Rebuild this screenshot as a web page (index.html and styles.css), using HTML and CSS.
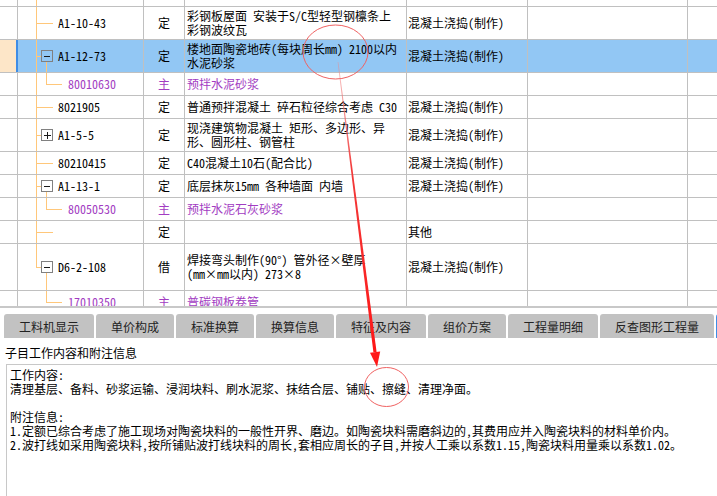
FILE: index.html
```html
<!DOCTYPE html>
<html lang="zh-CN">
<head>
<meta charset="utf-8">
<title>子目工作内容</title>
<link rel="stylesheet" href="styles.css">
</head>
<body>
<div class="page">
  <div class="grid">
    <div class="row h7">
      <div class="c ind"></div><div class="c code t-leafv"></div><div class="c"></div><div class="c"></div><div class="c"></div><div class="c"></div><div class="c last"></div>
    </div>
    <div class="row h33">
      <div class="c ind"></div><div class="c code t-leaf">A1-10-43</div><div class="c ty">定</div><div class="c nm">彩钢板屋面 安装于S/C型轻型钢檩条上<br>彩钢波纹瓦</div><div class="c sp">混凝土浇捣(制作)</div><div class="c"></div><div class="c last"></div>
    </div>
    <div class="row h33 sel">
      <div class="c ind"></div><div class="c code t-open"><span class="box minus"></span>A1-12-73</div><div class="c ty">定</div><div class="c nm">楼地面陶瓷地砖(每块周长mm) 2100以内<br>水泥砂浆</div><div class="c sp">混凝土浇捣(制作)</div><div class="c"></div><div class="c last"></div>
    </div>
    <div class="row h23 purple">
      <div class="c ind"></div><div class="c code t-child">80010630</div><div class="c ty">主</div><div class="c nm">预拌水泥砂浆</div><div class="c sp"></div><div class="c"></div><div class="c last"></div>
    </div>
    <div class="row h23">
      <div class="c ind"></div><div class="c code t-leaf">8021905</div><div class="c ty">定</div><div class="c nm">普通预拌混凝土 碎石粒径综合考虑 C30</div><div class="c sp">混凝土浇捣(制作)</div><div class="c"></div><div class="c last"></div>
    </div>
    <div class="row h33">
      <div class="c ind"></div><div class="c code t-closed"><span class="box plus"></span>A1-5-5</div><div class="c ty">定</div><div class="c nm">现浇建筑物混凝土 矩形、多边形、异<br>形、圆形柱、钢管柱</div><div class="c sp">混凝土浇捣(制作)</div><div class="c"></div><div class="c last"></div>
    </div>
    <div class="row h23">
      <div class="c ind"></div><div class="c code t-leaf">80210415</div><div class="c ty">定</div><div class="c nm">C40混凝土10石(配合比)</div><div class="c sp">混凝土浇捣(制作)</div><div class="c"></div><div class="c last"></div>
    </div>
    <div class="row h23">
      <div class="c ind"></div><div class="c code t-open"><span class="box minus"></span>A1-13-1</div><div class="c ty">定</div><div class="c nm">底层抹灰15mm 各种墙面 内墙</div><div class="c sp">混凝土浇捣(制作)</div><div class="c"></div><div class="c last"></div>
    </div>
    <div class="row h23 purple">
      <div class="c ind"></div><div class="c code t-child">80050530</div><div class="c ty">主</div><div class="c nm">预拌水泥石灰砂浆</div><div class="c sp"></div><div class="c"></div><div class="c last"></div>
    </div>
    <div class="row h23">
      <div class="c ind"></div><div class="c code t-leaf"></div><div class="c ty">定</div><div class="c nm"></div><div class="c sp">其他</div><div class="c"></div><div class="c last"></div>
    </div>
    <div class="row h47">
      <div class="c ind"></div><div class="c code t-lastopen"><span class="box minus"></span>D6-2-108</div><div class="c ty">借</div><div class="c nm">焊接弯头制作(90°) 管外径×壁厚<br>(mm×mm以内) 273×8</div><div class="c sp">混凝土浇捣(制作)</div><div class="c"></div><div class="c last"></div>
    </div>
    <div class="row h23 purple">
      <div class="c ind"></div><div class="c code t-lastchild">17010350</div><div class="c ty">主</div><div class="c nm">普碳钢板卷管</div><div class="c sp"></div><div class="c"></div><div class="c last"></div>
    </div>
  </div>
  <div class="split"></div>
  <div class="tabs">
    <div class="tab">工料机显示</div>
    <div class="tab">单价构成</div>
    <div class="tab">标准换算</div>
    <div class="tab">换算信息</div>
    <div class="tab">特征及内容</div>
    <div class="tab">组价方案</div>
    <div class="tab">工程量明细</div>
    <div class="tab">反查图形工程量</div>
    <div class="tab active">说明信息</div>
  </div>
  <div class="title">子目工作内容和附注信息</div>
  <div class="info">
    <div class="para">工作内容:<br>清理基层、备料、砂浆运输、浸润块料、刷水泥浆、抹结合层、铺贴、擦缝、清理净面。</div>
    <div class="para notes">附注信息:<br>1.定额已综合考虑了施工现场对陶瓷块料的一般性开界、磨边。如陶瓷块料需磨斜边的,其费用应并入陶瓷块料的材料单价内。<br>2.波打线如采用陶瓷块料,按所铺贴波打线块料的周长,套相应周长的子目,并按人工乘以系数1.15,陶瓷块料用量乘以系数1.02。</div>
  </div>
  <svg class="marks" width="717" height="496" viewBox="0 0 717 496">
    <defs>
      <linearGradient id="arrowg" x1="338" y1="62" x2="377" y2="367" gradientUnits="userSpaceOnUse">
        <stop offset="0" stop-color="#f08a8a" stop-opacity="0.5"/>
        <stop offset="0.35" stop-color="#f23a3a"/>
        <stop offset="1" stop-color="#ff1414"/>
      </linearGradient>
    </defs>
    <ellipse cx="335.5" cy="52" rx="32.5" ry="27" fill="none" stroke="#f06262" stroke-width="1"/>
    <polygon points="337.6,62 338.4,62 376.6,351.9 373.4,352.3" fill="url(#arrowg)"/>
    <polygon points="380.2,351.4 370,352.8 377,367" fill="#ff1a1a"/>
    <ellipse cx="386.5" cy="387" rx="22" ry="19.5" fill="none" stroke="#f06262" stroke-width="1"/>
  </svg>
</div>
</body>
</html>
```
FILE: styles.css
```css
body {
  margin: 0;
  background: #fff;
}

.page {
  --tree: #ffc77a;
  --grid: #c0c0c0;
  position: relative;
  width: 717px;
  height: 496px;
  overflow: hidden;
  font-family: "Noto Sans Mono CJK SC", "Noto Sans CJK SC", monospace;
  font-size: 12px;
  color: #000;
  background: #fff;
}

/* ---------- table ---------- */
.grid {
  height: 306px;
  overflow: hidden;
}

.row {
  display: grid;
  grid-template-columns: 18px 126px 41px 222px 121px 160px 1fr;
  box-sizing: border-box;
  border-bottom: 1px solid var(--grid);
  line-height: 14px;
}

.h7 { height: 7px; }
.h23 { height: 23px; }
.h33 { height: 33px; }
.h47 { height: 47px; }

.c {
  box-sizing: border-box;
  border-right: 1px solid var(--grid);
  display: flex;
  align-items: center;
  min-width: 0;
  overflow: hidden;
  white-space: nowrap;
}

.c.last { border-right: none; }

.sel { background: #92c7f4; }
.sel .ind {
  background: #fde6c8;
  border-right: 2px solid #3f8de6;
}

.ty { justify-content: center; }
.nm { padding-left: 2px; }
.sp { padding-left: 1px; }

.purple { color: #a23cc2; }

/* tree column */
.code { padding-left: 40px; }

.t-leafv {
  background: linear-gradient(var(--tree), var(--tree)) 18px 0 / 1px 100% no-repeat;
}

.t-leaf {
  background:
    linear-gradient(var(--tree), var(--tree)) 18px 0 / 1px 100% no-repeat,
    linear-gradient(var(--tree), var(--tree)) 18px 50% / 17px 1px no-repeat;
}

.t-open,
.t-closed,
.t-lastopen {
  padding-left: 23px;
}

.t-open {
  background:
    linear-gradient(var(--tree), var(--tree)) 18px 0 / 1px 100% no-repeat,
    linear-gradient(var(--tree), var(--tree)) 18px 50% / 5px 1px no-repeat,
    linear-gradient(var(--tree), var(--tree)) 28px 100% / 1px 50% no-repeat;
}

.t-closed {
  background:
    linear-gradient(var(--tree), var(--tree)) 18px 0 / 1px 100% no-repeat,
    linear-gradient(var(--tree), var(--tree)) 18px 50% / 5px 1px no-repeat;
}

.t-lastopen {
  background:
    linear-gradient(var(--tree), var(--tree)) 18px 0 / 1px 50% no-repeat,
    linear-gradient(var(--tree), var(--tree)) 18px 50% / 5px 1px no-repeat,
    linear-gradient(var(--tree), var(--tree)) 28px 100% / 1px 50% no-repeat;
}

.t-child {
  padding-left: 50px;
  background:
    linear-gradient(var(--tree), var(--tree)) 18px 0 / 1px 100% no-repeat,
    linear-gradient(var(--tree), var(--tree)) 28px 0 / 1px 50% no-repeat,
    linear-gradient(var(--tree), var(--tree)) 28px 50% / 16px 1px no-repeat;
}

.t-lastchild {
  padding-left: 50px;
  background:
    linear-gradient(var(--tree), var(--tree)) 28px 0 / 1px 50% no-repeat,
    linear-gradient(var(--tree), var(--tree)) 28px 50% / 16px 1px no-repeat;
}

.box {
  flex: none;
  box-sizing: border-box;
  width: 12px;
  height: 12px;
  margin-right: 5px;
  border: 1px solid #808080;
  background-color: #fff;
}

.sel .box { background-color: #92c7f4; }

.box.minus {
  background-image: linear-gradient(#1a1a1a, #1a1a1a);
  background-position: center;
  background-size: 6px 1px;
  background-repeat: no-repeat;
}

.box.plus {
  background-image: linear-gradient(#1a1a1a, #1a1a1a), linear-gradient(#1a1a1a, #1a1a1a);
  background-position: center, center;
  background-size: 7px 1px, 1px 7px;
  background-repeat: no-repeat;
}

/* ---------- splitter + tabs ---------- */
.split {
  height: 2px;
  background: #c8c8c8;
}

.tabs {
  box-sizing: border-box;
  height: 30px;
  padding: 6px 0 0 4px;
  display: flex;
  gap: 2px;
  overflow: hidden;
}

.tab {
  flex: none;
  height: 24px;
  padding: 0 15px;
  background: #c2c2c2;
  border-radius: 3px 3px 0 0;
  display: flex;
  align-items: center;
  justify-content: center;
  font-family: "Noto Sans CJK SC", sans-serif;
  font-size: 12px;
  color: #222;
  white-space: nowrap;
}

.tab.active {
  background: #3e8ee6;
  color: #fff;
}

/* ---------- info area ---------- */
.title {
  padding: 8px 0 4px 5px;
  line-height: 14px;
  font-family: "Noto Sans CJK SC", sans-serif;
}

.info {
  margin-left: 6px;
  height: 200px;
  border-top: 1px solid #c8c8c8;
  border-left: 1px solid #c8c8c8;
  padding: 3px 0 0 3px;
  line-height: 14px;
  white-space: nowrap;
}

.notes { margin-top: 14px; }

.marks {
  position: absolute;
  left: 0;
  top: 0;
  pointer-events: none;
}
```
